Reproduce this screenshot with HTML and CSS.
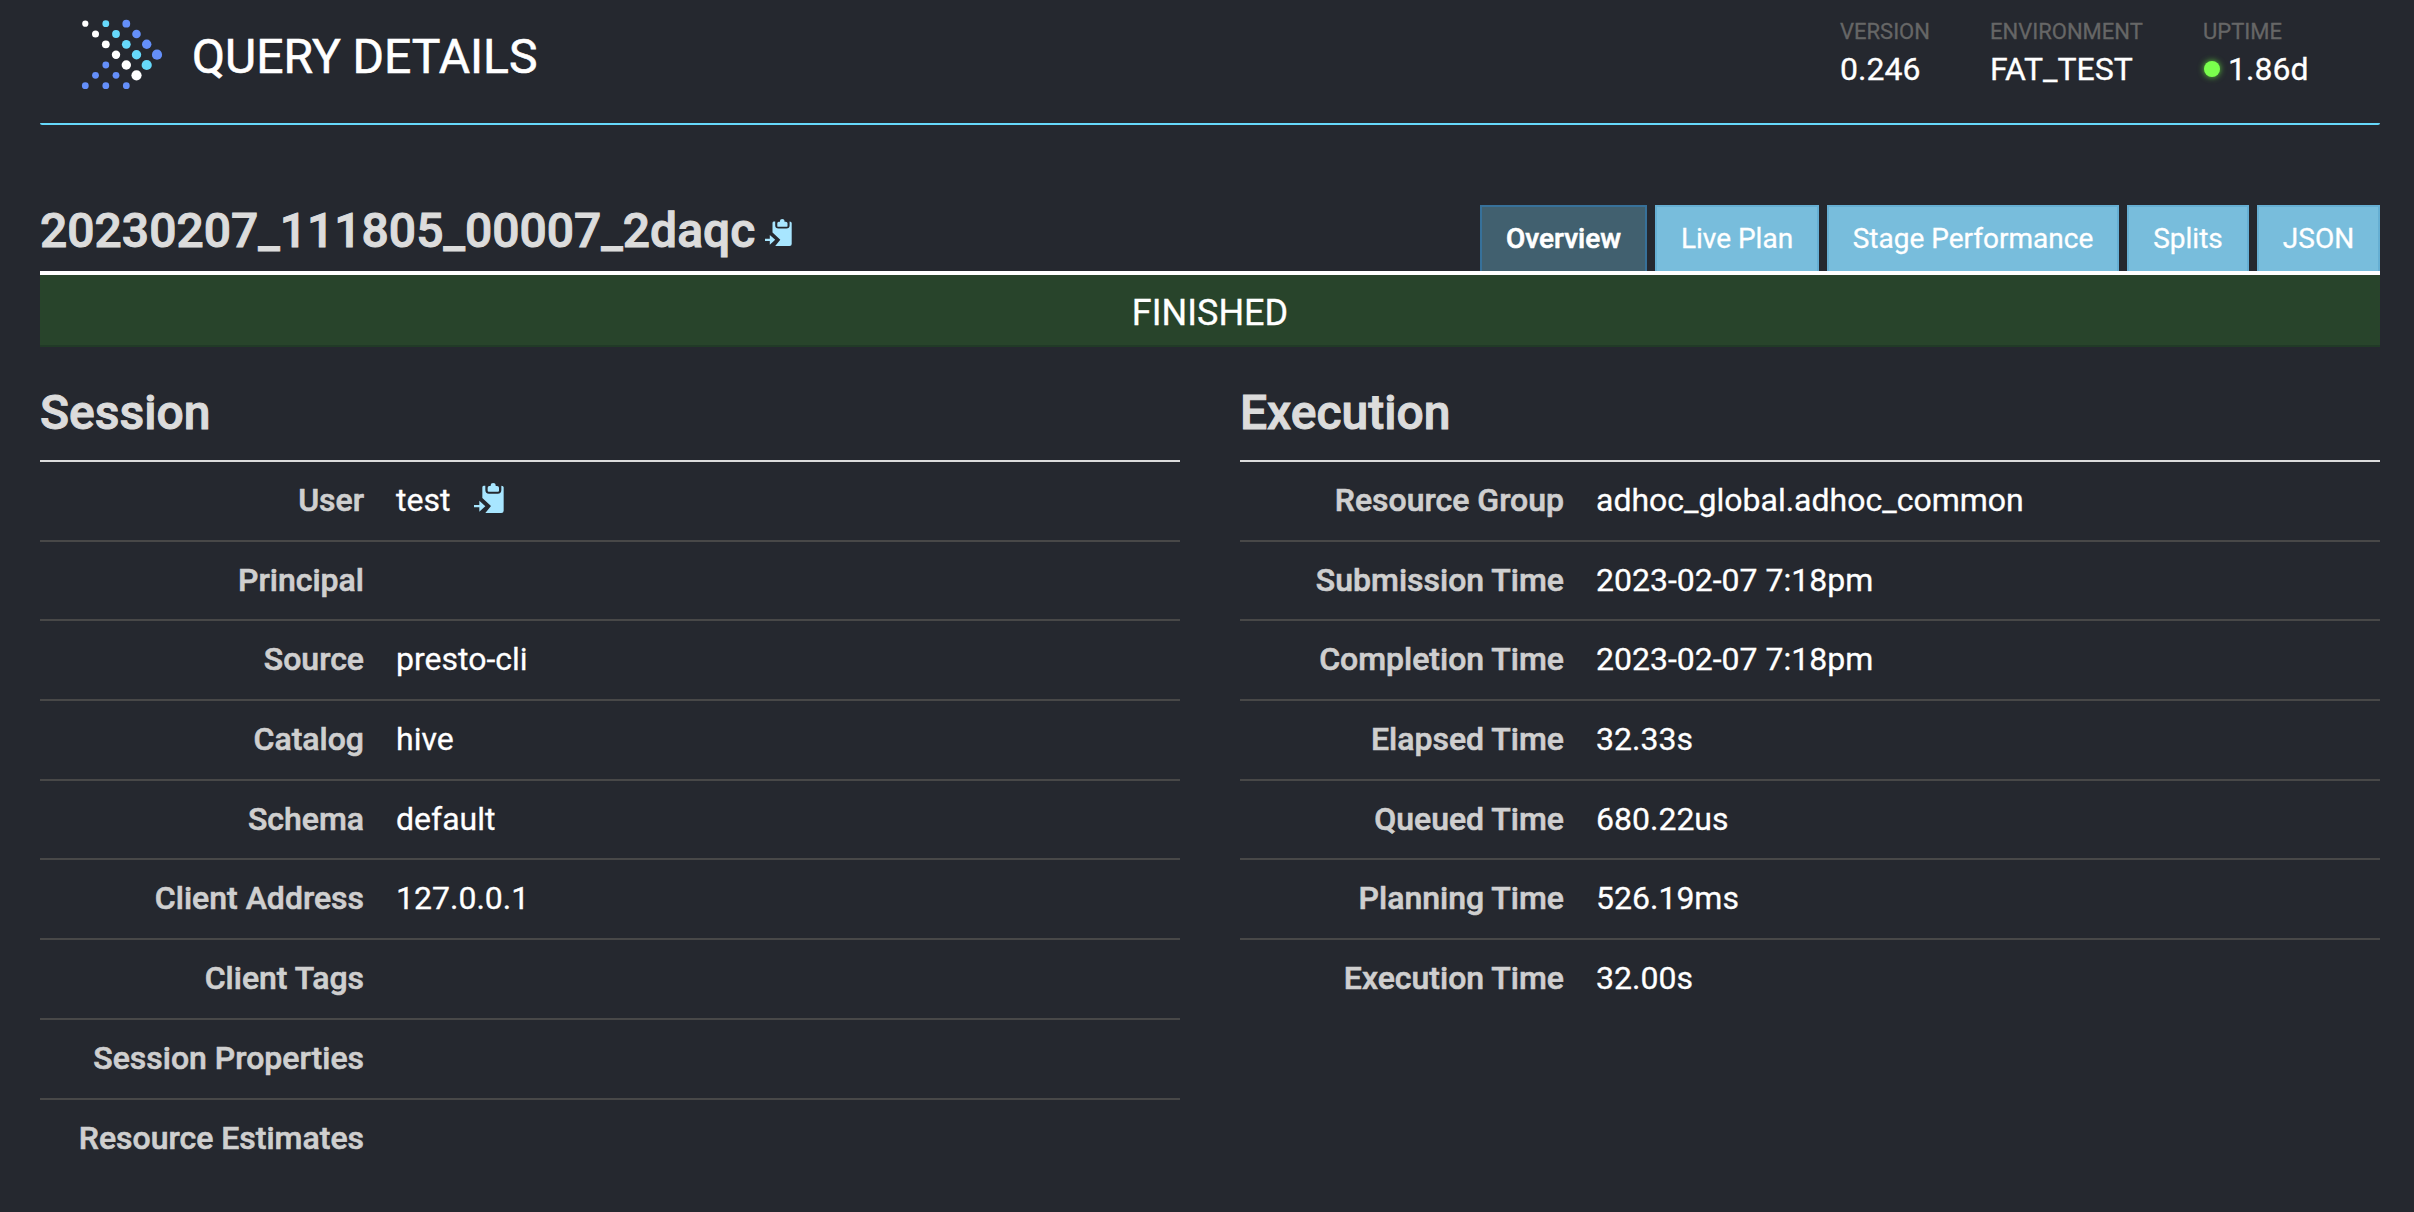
FILE: index.html
```html
<!DOCTYPE html>
<html lang="en">
<head>
<meta charset="utf-8">
<title>Query Details</title>
<link rel="stylesheet" href="styles.css">
</head>
<body>
<svg class="defs" width="0" height="0" aria-hidden="true">
  <symbol id="copy" viewBox="0 0 90 90">
    <path d="M25 13q0-4 4-5h5v13q0 11 11 11h26q11 0 11-11V8q7 1 7 5v70q0 7-7 7H34l17-21-26-24z"/>
    <path d="M50 9V6q0-6 7.500-6t7.500 6v3h4q6 0 6 5v9q0 3-3 3H44q-3 0-3-3v-9q0-5 5-5z"/>
    <path d="M0 66h16V53l18 16.500L16 86V73H0z"/>
  </symbol>
</svg>
<header class="topbar">
  <svg class="logo" viewBox="0 0 86 74" role="img" aria-label="Presto">
    <g fill="#fff">
      <circle cx="5.300" cy="5.700" r="3.100"/><circle cx="15.500" cy="16" r="3.500"/><circle cx="25.800" cy="26.300" r="3.900"/><circle cx="36" cy="36.700" r="4.200"/><circle cx="46.300" cy="47" r="4.700"/><circle cx="56.500" cy="57.300" r="5.100"/>
    </g>
    <g fill="#66d9fb">
      <circle cx="25.800" cy="5.700" r="3.400"/><circle cx="36" cy="16" r="3.900"/><circle cx="46.300" cy="26.300" r="4.400"/><circle cx="56.500" cy="36.700" r="4.700"/><circle cx="66.700" cy="47" r="5.100"/>
    </g>
    <g fill="#648ffa">
      <circle cx="46.300" cy="5.700" r="3.900"/><circle cx="56.500" cy="16" r="4.300"/><circle cx="66.700" cy="26.300" r="4.700"/><circle cx="77" cy="36.700" r="5.100"/>
      <circle cx="25.800" cy="47" r="3.400"/><circle cx="15.500" cy="57.300" r="3.400"/><circle cx="36" cy="57.300" r="3.400"/><circle cx="5.300" cy="67.700" r="3.400"/><circle cx="25.800" cy="67.700" r="3.400"/><circle cx="46.300" cy="67.700" r="3.400"/>
    </g>
  </svg>
  <span class="page-title">QUERY DETAILS</span>
  <div class="stats">
    <div class="stat version"><span class="stat-label">VERSION</span><span class="stat-value">0.246</span></div>
    <div class="stat environment"><span class="stat-label">ENVIRONMENT</span><span class="stat-value">FAT_TEST</span></div>
    <div class="stat uptime"><span class="stat-label">UPTIME</span><span class="stat-value"><i class="status-light"></i>1.86d</span></div>
  </div>
</header>
<main>
  <div class="query-head">
    <h3 class="query-id">20230207_111805_00007_2daqc<svg class="copy-icon"><use href="#copy"/></svg></h3>
    <nav class="tabs">
      <a class="tab active">Overview</a>
      <a class="tab live">Live Plan</a>
      <a class="tab stage">Stage Performance</a>
      <a class="tab splits">Splits</a>
      <a class="tab json">JSON</a>
    </nav>
  </div>
  <div class="progress">FINISHED</div>
  <div class="columns">
    <section>
      <h3 class="section-title">Session</h3>
      <dl class="info">
        <div class="row"><dt>User</dt><dd>test<svg class="copy-icon large"><use href="#copy"/></svg></dd></div>
        <div class="row"><dt>Principal</dt><dd></dd></div>
        <div class="row"><dt>Source</dt><dd>presto-cli</dd></div>
        <div class="row"><dt>Catalog</dt><dd>hive</dd></div>
        <div class="row"><dt>Schema</dt><dd>default</dd></div>
        <div class="row"><dt>Client Address</dt><dd>127.0.0.1</dd></div>
        <div class="row"><dt>Client Tags</dt><dd></dd></div>
        <div class="row"><dt>Session Properties</dt><dd></dd></div>
        <div class="row"><dt>Resource Estimates</dt><dd></dd></div>
      </dl>
    </section>
    <section>
      <h3 class="section-title">Execution</h3>
      <dl class="info">
        <div class="row"><dt>Resource Group</dt><dd>adhoc_global.adhoc_common</dd></div>
        <div class="row"><dt>Submission Time</dt><dd>2023-02-07 7:18pm</dd></div>
        <div class="row"><dt>Completion Time</dt><dd>2023-02-07 7:18pm</dd></div>
        <div class="row"><dt>Elapsed Time</dt><dd>32.33s</dd></div>
        <div class="row"><dt>Queued Time</dt><dd>680.22us</dd></div>
        <div class="row"><dt>Planning Time</dt><dd>526.19ms</dd></div>
        <div class="row"><dt>Execution Time</dt><dd>32.00s</dd></div>
      </dl>
    </section>
  </div>
</main>
</body>
</html>
```
FILE: styles.css
```css
* { box-sizing: border-box; }
html { background: #25282f; }
body {
  margin: 0;
  padding: 0 34px 0 40px;
  height: 1212px;
  overflow: hidden;
  background: #25282f;
  color: #fff;
  font: 32px/45.714px Roboto, sans-serif;
  -webkit-text-stroke: 0.3px currentColor;
}
h3, dl, dd { margin: 0; }
.defs { display: block; height: 0; }

.topbar {
  display: flex;
  height: 125px;
  width: 2340px;
  padding-left: 40px;
  border-bottom: 2px solid #66d9fb;
  border-radius: 2px;
}
.logo { width: 86px; height: 74px; margin-top: 18px; }
.page-title { margin: 29px 0 0 26px; font-size: 48px; line-height: 56px; -webkit-text-stroke-width: 0.6px; }
.stats { display: flex; margin-left: auto; padding-top: 16px; }
.stat { display: flex; flex-direction: column; }
.version { width: 150px; }
.environment { width: 213px; }
.uptime { width: 177px; }
.stat-label { color: #666; font-size: 22px; line-height: 31px; }
.stat-value { display: flex; align-items: center; line-height: 44px; }
.status-light {
  width: 16px;
  height: 16px;
  margin: 0 8px 0 1px;
  border-radius: 50%;
  background: #7aff4d;
  box-shadow: 0 0 6px #5ed13a;
}

.query-head {
  display: flex;
  justify-content: space-between;
  width: 2340px;
  height: 150px;
  padding-top: 80px;
  border-bottom: 4px solid #fff;
}
.query-id, .section-title { color: #dcdcdc; font-size: 48px; font-weight: 500; -webkit-text-stroke-width: 1px; }
.query-id { display: flex; line-height: 51px; }
.copy-icon { width: 27px; height: 27px; margin: 14px 0 0 10px; fill: #a8e6ff; stroke: none; }
.copy-icon.large { width: 30px; height: 30px; margin: 5px 0 0 24px; }
.tabs { display: flex; gap: 8px; }
.tab {
  height: 66px;
  border: 2px solid #66afd3;
  border-bottom: 0;
  background: #78bddc;
  font-size: 28px;
  line-height: 63px;
  text-align: center;
}
.tab.active { width: 167px; border-color: #37719a; background: #41606f; font-weight: 500; -webkit-text-stroke-width: 0.6px; }
.live { width: 164px; }
.stage { width: 292px; }
.splits { width: 122px; }
.json { width: 123px; }

.progress {
  width: 2340px;
  height: 72px;
  border-bottom: 2px solid #213a27;
  background: #28442b;
  font-size: 36px;
  line-height: 76px;
  text-align: center;
}
.columns { display: grid; grid-template-columns: 1140px 1140px; gap: 60px; padding-top: 38px; }
.section-title { height: 77px; border-bottom: 2px solid #dcdcdc; line-height: 56px; }
.row { display: flex; height: 77.61px; padding: 16px 0; }
.row + .row { border-top: 2px solid #484848; height: 79.714px; }
dt { width: 340px; padding-right: 16px; color: #cfcfcf; font-weight: 500; text-align: right; -webkit-text-stroke-width: 0.6px; }
dd { display: flex; padding-left: 16px; }
```
